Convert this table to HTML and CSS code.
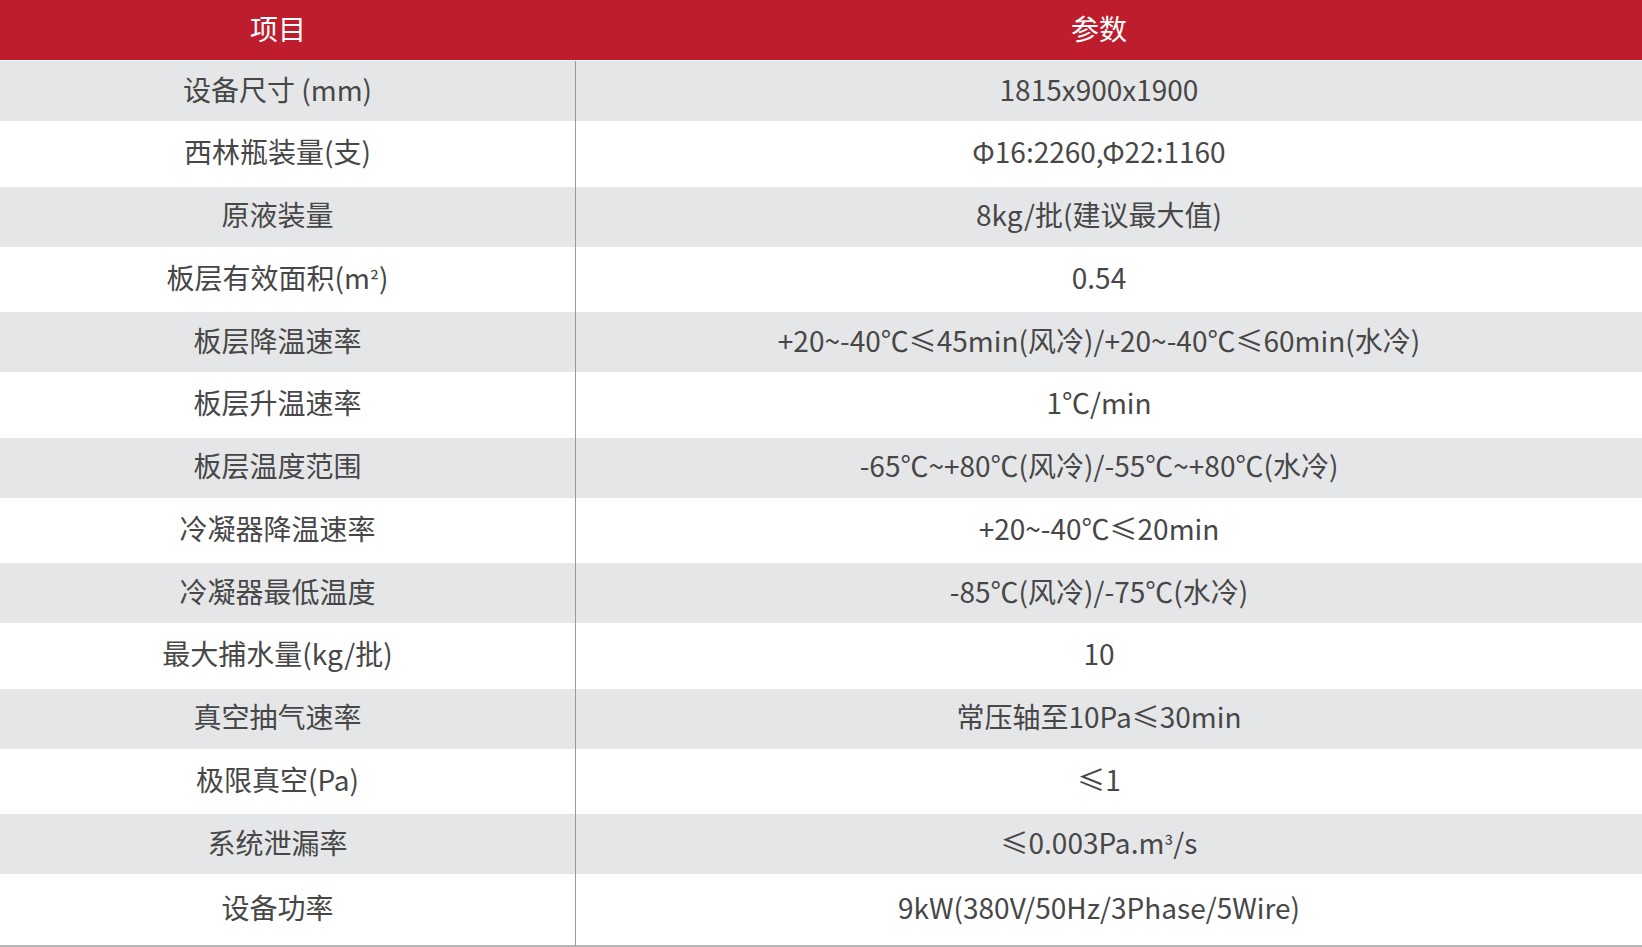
FILE: index.html
```html
<!DOCTYPE html>
<html lang="zh-CN">
<head>
<meta charset="utf-8">
<title>参数表</title>
<link rel="stylesheet" href="styles.css">
</head>
<body>
<table class="spec">
  <colgroup><col class="c1"><col class="c2"></colgroup>
  <thead>
    <tr><th>项目</th><th>参数</th></tr>
  </thead>
  <tbody>
    <tr class="g"><td>设备尺寸 (mm)</td><td>1815x900x1900</td></tr>
    <tr class="w"><td>西林瓶装量(支)</td><td>Φ16:2260,Φ22:1160</td></tr>
    <tr class="g"><td>原液装量</td><td>8kg/批(建议最大值)</td></tr>
    <tr class="w"><td>板层有效面积(m<span class="sup">²</span>)</td><td>0.54</td></tr>
    <tr class="g"><td>板层降温速率</td><td>+20~-40℃≤45min(风冷)/+20~-40℃≤60min(水冷)</td></tr>
    <tr class="w"><td>板层升温速率</td><td>1℃/min</td></tr>
    <tr class="g"><td>板层温度范围</td><td>-65℃~+80℃(风冷)/-55℃~+80℃(水冷)</td></tr>
    <tr class="w"><td>冷凝器降温速率</td><td>+20~-40℃≤20min</td></tr>
    <tr class="g"><td>冷凝器最低温度</td><td>-85℃(风冷)/-75℃(水冷)</td></tr>
    <tr class="w"><td>最大捕水量(kg/批)</td><td>10</td></tr>
    <tr class="g"><td>真空抽气速率</td><td>常压轴至10Pa≤30min</td></tr>
    <tr class="w"><td>极限真空(Pa)</td><td>≤1</td></tr>
    <tr class="g"><td>系统泄漏率</td><td>≤0.003Pa.m<span class="sup">³</span>/s</td></tr>
    <tr class="w last"><td>设备功率</td><td>9kW(380V/50Hz/3Phase/5Wire)</td></tr>
  </tbody>
</table>
</body>
</html>
```
FILE: styles.css
```css
html, body {
  margin: 0;
  padding: 0;
  background: #ffffff;
}
.spec {
  width: 1642px;
  table-layout: fixed;
  border-collapse: separate;
  border-spacing: 0;
  font-family: "Noto Sans CJK SC", "Noto Sans", sans-serif;
  font-size: 28px;
  line-height: 1.2;
  color: #474747;
}
.spec .c1 { width: 576px; }
.spec .c2 { width: 1066px; }
.spec th, .spec td {
  padding: 0 20px 3px 0;
  text-align: center;
  vertical-align: middle;
  white-space: nowrap;
}
.spec th {
  height: 57px;
  background: #be1d2d;
  color: #ffffff;
  font-weight: normal;
  border-bottom: 1px solid #ffffff;
}
.spec td:first-child {
  border-right: 1px solid #9a9a9a;
}
.spec tr.g td {
  height: 57px;
  background: #e5e6e8;
}
.spec tr.w td {
  height: 62.5px;
  background: #ffffff;
}
.spec tr.last td {
  height: 68px;
  border-bottom: 2px solid #b5b5b5;
}
.sup {
  font-size: 0.78em;
  line-height: 1;
}
```
